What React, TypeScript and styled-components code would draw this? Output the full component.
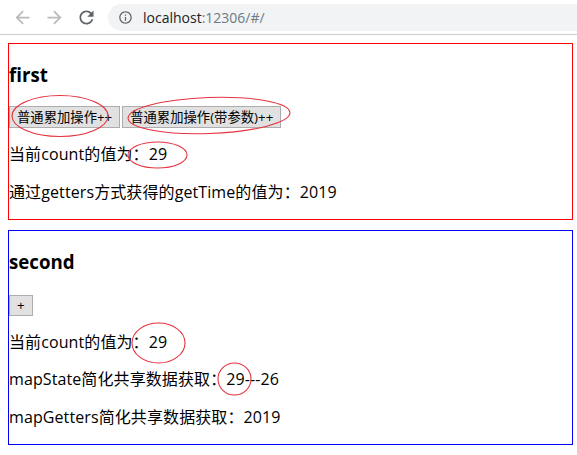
import React from "react";
import styled, { createGlobalStyle } from "styled-components";

const GlobalStyle = createGlobalStyle`
  html, body { margin: 0; padding: 0; background: #fff; overflow: hidden; }
  body { font-family: "Open Sans", "Noto Sans CJK SC", sans-serif; color: #000; }
`;

const Screen = styled.div`
  position: relative;
  width: 577px;
  height: 455px;
`;

const BrowserBar = styled.header`
  height: 34px;
  border-bottom: 1px solid #cbcdd1;
  display: flex;
  align-items: center;
  padding-left: 8px;
  gap: 4px;
  background: #fff;
`;

const NavButton = styled.div<{ $enabled?: boolean }>`
  width: 28px;
  height: 28px;
  display: flex;
  align-items: center;
  justify-content: center;
  color: ${(p) => (p.$enabled ? "#5f6368" : "#b8babd")};
`;

const AddressPill = styled.div`
  margin-left: 4px;
  flex: 1;
  height: 27px;
  border-radius: 14px 0 0 14px;
  background: #f1f3f4;
  display: flex;
  align-items: center;
  padding-left: 10px;
  gap: 10px;
  font-size: 14px;
  color: #202124;
`;

const UrlHost = styled.span`
  color: #202124;
`;

const UrlRest = styled.span`
  color: #6f7a84;
`;

const Page = styled.main`
  padding: 8px;
`;

const Panel = styled.section<{ $color: string }>`
  width: 565px;
  box-sizing: border-box;
  border: 1px solid ${(p) => p.$color};
  margin-bottom: 10px;
`;

const Title = styled.h3`
  margin: 18.72px 0;
  font-size: 18.72px;
  line-height: 24.5px;
  font-weight: 700;
`;

const ButtonRow = styled.div`
  display: flex;
  align-items: flex-end;
  gap: 2px;
  height: 22.5px;
`;

const Button = styled.button<{ $cjk?: boolean }>`
  font-family: "Open Sans", "Noto Sans CJK SC", sans-serif;
  font-size: 13.33px;
  line-height: ${(p) => (p.$cjk ? "18.5px" : "17px")};
  padding: 1px 7px;
  border: 1px solid #adadad;
  background: #e1e1e1;
  color: #000;
  margin: 0;
  border-radius: 0;
`;

const Line = styled.p`
  margin: 16px 0;
  font-size: 16px;
  line-height: 21.5px;
  white-space: nowrap;
  letter-spacing: 0.1px;
`;

const Annotations = styled.svg`
  position: absolute;
  top: 0;
  left: 0;
  pointer-events: none;
`;

const BackIcon = () => (
  <svg width="21" height="21" viewBox="0 0 24 24" fill="currentColor">
    <path d="M20 11H7.83l5.59-5.59L12 4l-8 8 8 8 1.41-1.41L7.83 13H20v-2z" />
  </svg>
);

const ForwardIcon = () => (
  <svg width="21" height="21" viewBox="0 0 24 24" fill="currentColor">
    <path d="M4 11h12.17l-5.59-5.59L12 4l8 8-8 8-1.41-1.41L16.17 13H4v-2z" />
  </svg>
);

const ReloadIcon = () => (
  <svg width="21" height="21" viewBox="0 0 24 24" fill="currentColor">
    <path d="M17.65 6.35C16.2 4.9 14.21 4 12 4c-4.42 0-7.990 3.58-7.990 8s3.57 8 7.990 8c3.73 0 6.84-2.55 7.73-6h-2.08c-.82 2.33-3.04 4-5.65 4-3.31 0-6-2.69-6-6s2.69-6 6-6c1.66 0 3.14.69 4.22 1.78L13 11h7V4l-2.35 2.35z" />
  </svg>
);

const InfoIcon = () => (
  <svg width="15" height="15" viewBox="0 0 24 24" fill="#5f6368">
    <path d="M11 7h2v2h-2zm0 4h2v6h-2zm1-9C6.48 2 2 6.48 2 12s4.48 10 10 10 10-4.48 10-10S17.520 2 12 2zm0 18c-4.41 0-8-3.59-8-8s3.59-8 8-8 8 3.59 8 8-3.59 8-8 8z" />
  </svg>
);

const marks = [
  { cx: 60, cy: 116, rx: 48, ry: 20.5, rot: 0 },
  { cx: 209, cy: 115.5, rx: 81, ry: 18, rot: -2 },
  { cx: 157.5, cy: 155, rx: 29.5, ry: 13, rot: 0 },
  { cx: 158.5, cy: 343, rx: 26.5, ry: 20, rot: 0 },
  { cx: 234.5, cy: 379, rx: 16.5, ry: 16, rot: 0 },
];

export default function App() {
  return (
    <Screen>
      <GlobalStyle />
      <BrowserBar>
        <NavButton>
          <BackIcon />
        </NavButton>
        <NavButton>
          <ForwardIcon />
        </NavButton>
        <NavButton $enabled>
          <ReloadIcon />
        </NavButton>
        <AddressPill>
          <InfoIcon />
          <span>
            <UrlHost>localhost</UrlHost>
            <UrlRest>:12306/#/</UrlRest>
          </span>
        </AddressPill>
      </BrowserBar>
      <Page>
        <Panel $color="#ff0000">
          <Title>first</Title>
          <ButtonRow>
            <Button $cjk>普通累加操作++</Button>
            <Button $cjk>普通累加操作(带参数)++</Button>
          </ButtonRow>
          <Line>当前count的值为：29</Line>
          <Line>通过getters方式获得的getTime的值为：2019</Line>
        </Panel>
        <Panel $color="#0000ff">
          <Title>second</Title>
          <ButtonRow>
            <Button>+</Button>
          </ButtonRow>
          <Line>当前count的值为：29</Line>
          <Line>mapState简化共享数据获取：29---26</Line>
          <Line>mapGetters简化共享数据获取：2019</Line>
        </Panel>
      </Page>
      <Annotations width="577" height="455" viewBox="0 0 577 455">
        {marks.map((m, i) => (
          <ellipse
            key={i}
            cx={m.cx}
            cy={m.cy}
            rx={m.rx}
            ry={m.ry}
            transform={`rotate(${m.rot} ${m.cx} ${m.cy})`}
            fill="none"
            stroke="#e6333f"
            strokeWidth="1.1"
          />
        ))}
      </Annotations>
    </Screen>
  );
}
